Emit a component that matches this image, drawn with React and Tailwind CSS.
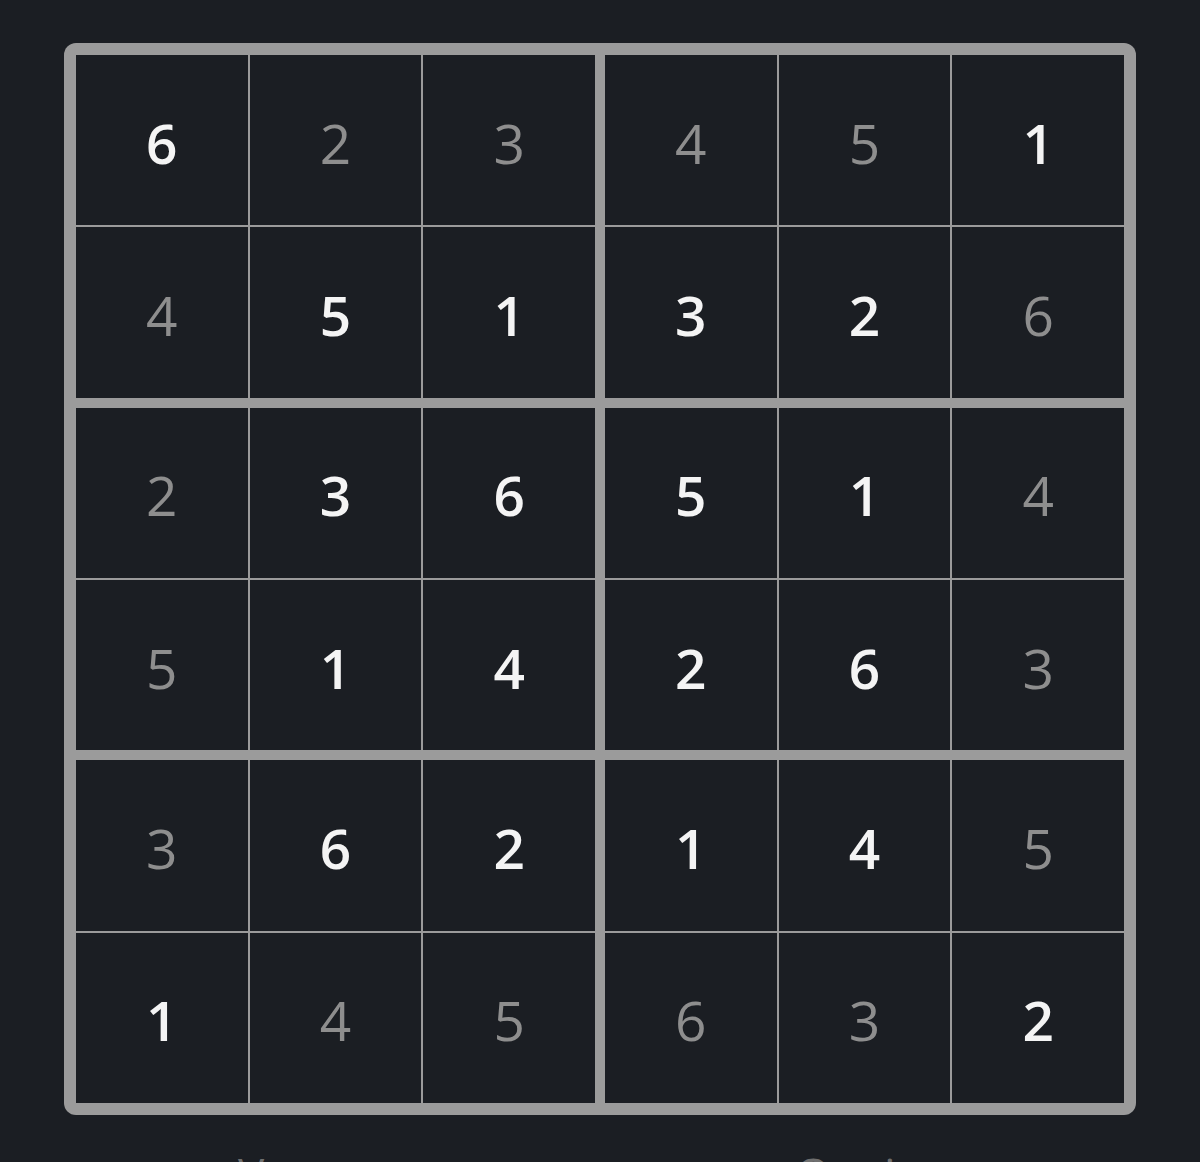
import React from 'react';

// 6x6 board, true = given (bright) digit
const board = [
  [[6, true], [2, false], [3, false], [4, false], [5, false], [1, true]],
  [[4, false], [5, true], [1, true], [3, true], [2, true], [6, false]],
  [[2, false], [3, true], [6, true], [5, true], [1, true], [4, false]],
  [[5, false], [1, true], [4, true], [2, true], [6, true], [3, false]],
  [[3, false], [6, true], [2, true], [1, true], [4, true], [5, false]],
  [[1, true], [4, false], [5, false], [6, false], [3, false], [2, true]],
];

const boxes = [];
for (let br = 0; br < 3; br++) {
  for (let bc = 0; bc < 2; bc++) {
    const cells = [];
    for (let r = 0; r < 2; r++) {
      for (let c = 0; c < 3; c++) {
        cells.push(board[br * 2 + r][bc * 3 + c]);
      }
    }
    boxes.push(cells);
  }
}

const Cell = ({ value, given }) => (
  <div className="flex items-center justify-center bg-[#1b1e23] pt-[4px]">
    <span
      className={
        given
          ? 'text-[55px] leading-none font-semibold text-[#f4f4f4]'
          : 'text-[55px] leading-none font-normal text-[#8e8e8e]'
      }
    >
      {value}
    </span>
  </div>
);

const App = () => {
  return (
    <div
      className="h-[1162px] w-full bg-[#1b1e23] pt-[43px] overflow-hidden"
      style={{ fontFamily: '"Open Sans", "Noto Sans", sans-serif' }}
    >
      <div className="mx-auto w-[1072px] h-[1072px] rounded-[12px] bg-[#9b9b9b] p-[12px]">
        <div className="grid h-full grid-cols-2 grid-rows-3 gap-[10px]">
          {boxes.map((cells, i) => (
            <div key={i} className="grid grid-cols-3 grid-rows-2 gap-[2px]">
              {cells.map(([v, g], j) => (
                <Cell key={j} value={v} given={g} />
              ))}
            </div>
          ))}
        </div>
      </div>

      <div className="mx-auto mt-[36px] grid w-[1072px] grid-cols-2 text-[44px] leading-none text-[#6f6f6f]">
        <div className="pl-[174px]">Verwerp</div>
        <div className="pl-[196px]">Opnieuw</div>
      </div>
    </div>
  );
};

export default App;
